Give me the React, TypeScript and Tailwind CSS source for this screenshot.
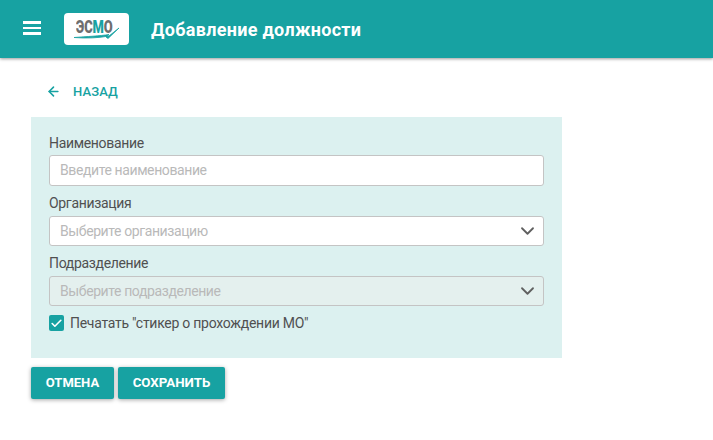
import React from 'react';
import { ArrowLeft, Check, ChevronDown } from 'lucide-react';

const Logo = () => (
  <div className="relative flex h-8 w-[65px] justify-center rounded-[4px] bg-white">
    <span className="mt-[4px] -ml-[5px] origin-top font-['Roboto',sans-serif] text-[18px] leading-[19px] font-black tracking-[-0.2px] text-[#6e6e6e] [transform:scaleX(0.72)]">
      ЭС<span className="text-[#17a2a2]">М</span>О
    </span>
    <svg className="absolute left-[9px] top-[13px]" width="48" height="14" viewBox="0 0 48 14" fill="none">
      <path d="M1 11.5C14 10.5 27 10 36 8.5L33 11L35 12.5L46 2L36 10C26 12 13 12.5 1 11.5Z" fill="#17a2a2" stroke="#17a2a2" strokeWidth="0.8" strokeLinejoin="round" />
    </svg>
  </div>
);

const Field = ({ label, placeholder, disabled, select, className }: { label: string; placeholder: string; disabled?: boolean; select?: boolean; className?: string }) => (
  <div className={className}>
    <div className="text-[14px] leading-5 tracking-[-0.33px] text-[#505050]">{label}</div>
    <div className={`flex items-center justify-between rounded-[3px] border border-[#c4c4c4] pl-[10px] pr-[5px] ${disabled ? 'bg-[#e4f0ee]' : 'bg-white'} ${select ? 'mt-[3px] h-[30px]' : 'mt-[2px] h-[31px]'}`}>
      <span className="text-[14px] tracking-[-0.4px] text-[#b9b9b9]">{placeholder}</span>
      {select && <ChevronDown className="h-[22px] w-[22px] translate-x-[0.5px] text-[#606060]" strokeWidth={2} />}
    </div>
  </div>
);

export default function App() {
  return (
    <div className="min-h-[440px] bg-white font-['Roboto',sans-serif]">
      <header className="flex h-[58px] items-center bg-[#17a2a2] pl-[23px] shadow-[0_1px_3px_rgba(0,0,0,0.4)]">
        <div className="mb-[2px] flex w-[18px] flex-col gap-[3px]">
          <span className="h-[2.5px] bg-white" />
          <span className="h-[2.5px] bg-white" />
          <span className="h-[2.5px] bg-white" />
        </div>
        <div className="ml-[23px]"><Logo /></div>
        <h1 className="ml-[22px] text-[18px] font-bold tracking-[0.3px] text-white">Добавление должности</h1>
      </header>

      <main className="px-[31px]">
        <div className="flex h-[59px] items-center gap-[12px] pl-[15px] pt-[8px] text-[#17a2a2]">
          <ArrowLeft className="h-[15px] w-[15px]" strokeWidth={2.5} />
          <span className="text-[13px] font-medium tracking-[0.1px]">НАЗАД</span>
        </div>

        <section className="h-[241px] w-[531px] bg-[#dcf1f0] px-[18px] pt-[16px]">
          <Field label="Наименование" placeholder="Введите наименование" />
          <Field className="mt-[7px]" label="Организация" placeholder="Выберите организацию" select />
          <Field className="mt-[7px]" label="Подразделение" placeholder="Выберите подразделение" select disabled />
          <div className="mt-[9px] flex items-center gap-[6px]">
            <span className="flex h-[16px] w-[15px] items-center justify-center rounded-[2px] bg-[#17a2a2]">
              <Check className="h-[13px] w-[13px] text-white" strokeWidth={3} />
            </span>
            <span className="text-[14px] leading-[16px] tracking-[-0.27px] text-[#505050]">Печатать "стикер о прохождении МО"</span>
          </div>
        </section>

        <div className="mt-[9px] flex gap-[4px]">
          <button type="button" className="h-[32px] w-[83px] rounded-[2px] bg-[#17a2a2] text-[13px] font-bold text-white shadow-[0_1px_4px_rgba(0,0,0,0.35)]">ОТМЕНА</button>
          <button type="button" className="h-[32px] w-[107px] rounded-[2px] bg-[#17a2a2] text-[13.3px] font-bold text-white shadow-[0_1px_4px_rgba(0,0,0,0.35)]">СОХРАНИТЬ</button>
        </div>
      </main>
    </div>
  );
}
